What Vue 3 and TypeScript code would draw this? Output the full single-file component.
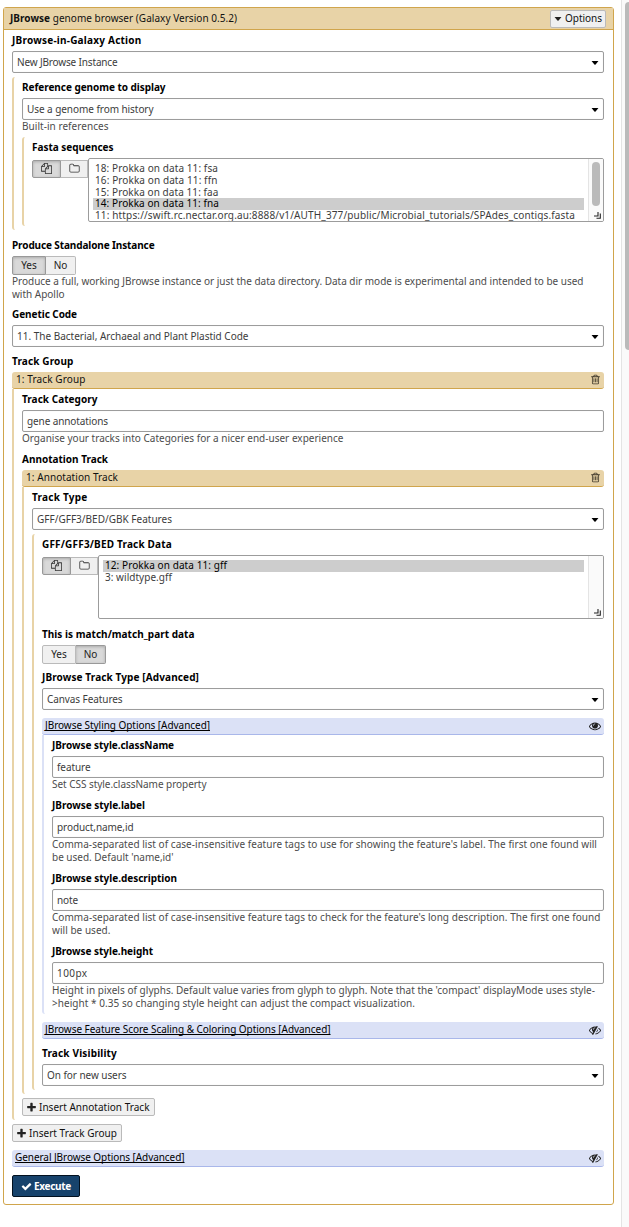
<script setup lang="ts">
import { h, type Directive, type FunctionalComponent } from 'vue'

const paths: Record<string, string> = {
  files: 'M1696 384q40 0 68 28t28 68v1216q0 40-28 68t-68 28h-960q-40 0-68-28t-28-68v-288h-544q-40 0-68-28t-28-68v-672q0-40 20-88t48-76l408-408q28-28 76-48t88-20h416q40 0 68 28t28 68v328q68-40 128-40h416zm-544 213l-299 299h299v-299zm-640-384l-299 299h299v-299zm196 647l316-316v-416h-384v416q0 40-28 68t-68 28h-416v640h512v-256q0-40 20-88t48-76zm956 804v-1152h-384v416q0 40-28 68t-68 28h-416v640h896z',
  folder: 'M1600 1312v-704q0-40-28-68t-68-28h-704q-40 0-68-28t-28-68v-64q0-40-28-68t-68-28h-320q-40 0-68 28t-28 68v960q0 40 28 68t68 28h1216q40 0 68-28t28-68zm128-704v704q0 92-66 158t-158 66h-1216q-92 0-158-66t-66-158v-960q0-92 66-158t158-66h320q92 0 158 66t66 158v32h672q92 0 158 66t66 158z',
  trash: 'M704 736v576q0 14-9 23t-23 9h-64q-14 0-23-9t-9-23v-576q0-14 9-23t23-9h64q14 0 23 9t9 23zm256 0v576q0 14-9 23t-23 9h-64q-14 0-23-9t-9-23v-576q0-14 9-23t23-9h64q14 0 23 9t9 23zm256 0v576q0 14-9 23t-23 9h-64q-14 0-23-9t-9-23v-576q0-14 9-23t23-9h64q14 0 23 9t9 23zm128 724v-948h-896v948q0 22 7 40.5t14.5 27 10.5 8.5h832q3 0 10.5-8.5t14.5-27 7-40.5zm-672-1076h448l-48-117q-7-9-17-11h-317q-10 2-17 11zm928 32v64q0 14-9 23t-23 9h-96v948q0 83-47 143.5t-113 60.5h-832q-66 0-113-58.5t-47-141.5v-952h-96q-14 0-23-9t-9-23v-64q0-14 9-23t23-9h309l70-167q15-37 54-63t79-26h320q40 0 79 26t54 63l70 167h309q14 0 23 9t9 23z',
  eye: 'M1664 960q-152-236-381-353 61 104 61 225 0 185-131.5 316.5t-316.5 131.5-316.5-131.5-131.5-316.5q0-121 61-225-229 117-381 353 133 205 333.5 326.5t434.5 121.5 434.5-121.5 333.5-326.5zm-720-384q0-20-14-34t-34-14q-125 0-214.5 89.5t-89.5 214.5q0 20 14 34t34 14 34-14 14-34q0-86 61-147t147-61q20 0 34-14t14-34zm848 384q0 34-20 69-140 230-376.5 368.5t-499.5 138.5-499.5-139-376.5-368q-20-35-20-69t20-69q140-229 376.5-368t499.5-139 499.5 139 376.5 368q20 35 20 69z',
  eyeSlash: 'M555 1335l78-141q-87-63-136-159t-49-203q0-121 61-225-229 117-381 353 167 258 427 375zm389-759q0-20-14-34t-34-14q-125 0-214.5 89.5t-89.5 214.5q0 20 14 34t34 14 34-14 14-34q0-86 61-147t147-61q20 0 34-14t14-34zm363-191q0 7-1 9-106 189-316 567t-315 566l-49 89q-10 16-28 16-12 0-134-70-16-10-16-28 0-12 44-87-143-65-263.5-173t-208.5-245q-20-31-20-69t20-69q153-235 380-371t496-136q89 0 180 17l54-97q10-16 28-16 5 0 18 6t31 15.5 33 18.5 31.5 18.5 19.5 11.5q16 10 16 27zm37 447q0 139-79 253.5t-209 164.5l280-502q8 45 8 84zm448 128q0 35-20 69-39 64-109 145-150 172-347.5 267t-419.5 95l74-132q212-18 392.5-137t301.5-307q-115-179-282-294l63-112q95 64 182.5 153t144.5 184q20 34 20 69z',
  plus: 'M1600 736v192q0 40-28 68t-68 28h-416v416q0 40-28 68t-68 28h-192q-40 0-68-28t-28-68v-416h-416q-40 0-68-28t-28-68v-192q0-40 28-68t68-28h416v-416q0-40 28-68t68-28h192q40 0 68 28t28 68v416h416q40 0 68 28t28 68z',
  check: 'M1671 566q0 40-28 68l-724 724-136 136q-28 28-68 28t-68-28l-136-136-362-362q-28-28-28-68t28-68l136-136q28-28 68-28t68 28l294 295 656-657q28-28 68-28t68 28l136 136q28 28 28 68z',
  caret: 'M128 448h1536l-640 768q-128 120-256 0z',
}

const Icon: FunctionalComponent<{ name: string; size: number }> = (p) =>
  h('svg', { viewBox: '0 0 1792 1792', width: p.size, height: p.size, fill: 'currentColor' }, [
    h('path', { d: paths[p.name] }),
  ])
Icon.props = ['name', 'size']

// Tracks a line of text so that it runs to the given width in pixels.
const vFit: Directive<HTMLElement, number> = {
  mounted(el, { value }) {
    const range = document.createRange()
    range.selectNodeContents(el)
    const natural = range.getBoundingClientRect().width
    const count = (el.textContent ?? '').length
    if (count > 0) el.style.letterSpacing = `${((value - natural) / count).toFixed(4)}px`
  },
}

interface Line { text: string; width: number }
interface StyleField { label: Line; value: Line; help: Line[] }
const styleFields: StyleField[] = [
  {
    label: { text: 'JBrowse style.className', width: 122 },
    value: { text: 'feature', width: 33.5 },
    help: [{ text: 'Set CSS style.className property', width: 154.5 }],
  },
  {
    label: { text: 'JBrowse style.label', width: 93 },
    value: { text: 'product,name,id', width: 76.5 },
    help: [
      {
        text: "Comma-separated list of case-insensitive feature tags to use for showing the feature's label. The first one found will",
        width: 545,
      },
      { text: "be used. Default 'name,id'", width: 121.5 },
    ],
  },
  {
    label: { text: 'JBrowse style.description', width: 125 },
    value: { text: 'note', width: 21 },
    help: [
      {
        text: "Comma-separated list of case-insensitive feature tags to check for the feature's long description. The first one found",
        width: 548.5,
      },
      { text: 'will be used.', width: 58.5 },
    ],
  },
  {
    label: { text: 'JBrowse style.height', width: 101 },
    value: { text: '100px', width: 30.5 },
    help: [
      {
        text: "Height in pixels of glyphs. Default value varies from glyph to glyph. Note that the 'compact' displayMode uses style-",
        width: 543,
      },
      { text: '>height * 0.35 so changing style height can adjust the compact visualization.', width: 363 },
    ],
  },
]

const fastaOptions: Line[] = [
  { text: '18: Prokka on data 11: fsa', width: 123 },
  { text: '16: Prokka on data 11: ffn', width: 122.5 },
  { text: '15: Prokka on data 11: faa', width: 123.5 },
  { text: '14: Prokka on data 11: fna', width: 124 },
  {
    text: '11: https://swift.rc.nectar.org.au:8888/v1/AUTH_377/public/Microbial_tutorials/SPAdes_contigs.fasta',
    width: 480,
  },
]
const gffOptions: Line[] = [
  { text: '12: Prokka on data 11: gff', width: 122 },
  { text: '3: wildtype.gff', width: 67 },
]
</script>

<template>
  <div class="page">
    <main class="panel">
      <header class="head">
        <span v-fit="227" class="title"><b>JBrowse</b> genome browser (Galaxy Version 0.5.2)</span>
        <button class="btn options"><Icon name="caret" :size="8" /><span v-fit="37">Options</span></button>
      </header>
      <div class="body">
        <div v-fit="129.5" class="label">JBrowse-in-Galaxy Action</div>
        <div class="field"><span v-fit="100.5">New JBrowse Instance</span><Icon class="arrow" name="caret" :size="8" /></div>

        <section class="nest gap4">
          <div v-fit="143.5" class="label">Reference genome to display</div>
          <div class="field"><span v-fit="126.5">Use a genome from history</span><Icon class="arrow" name="caret" :size="8" /></div>
          <div v-fit="86.5" class="help">Built-in references</div>
          <section class="nest inner gap4">
            <div v-fit="81.5" class="label">Fasta sequences</div>
            <div class="picker">
              <div class="modes">
                <button class="mode on"><Icon name="files" :size="11" /></button>
                <button class="mode"><Icon name="folder" :size="11" /></button>
              </div>
              <div class="list">
                <div class="rows">
                  <div v-for="(o, i) in fastaOptions" :key="o.text" v-fit="o.width" class="opt" :class="{ sel: i === 3 }">{{ o.text }}</div>
                </div>
                <div class="track">
                  <div class="thumb"></div>
                  <svg class="grip" viewBox="0 0 7 7" width="7" height="7"><path d="M0 4H4V0M2.5 6.3H6.3V1.5" /></svg>
                </div>
              </div>
            </div>
          </section>
        </section>

        <div v-fit="142.5" class="label gap5">Produce Standalone Instance</div>
        <div class="toggle"><button class="yes on">Yes</button><button class="no">No</button></div>
        <div v-fit="571.5" class="help">Produce a full, working JBrowse instance or just the data directory. Data dir mode is experimental and intended to be used</div>
        <div v-fit="52.5" class="help">with Apollo</div>

        <div v-fit="65" class="label gap3">Genetic Code</div>
        <div class="field"><span v-fit="231.5">11. The Bacterial, Archaeal and Plant Plastid Code</span><Icon class="arrow" name="caret" :size="8" /></div>

        <div v-fit="61.5" class="label gap4">Track Group</div>
        <div class="bar"><span v-fit="69.5">1: Track Group</span><Icon name="trash" :size="11" /></div>
        <section class="nest joined">
          <div v-fit="75.5" class="label">Track Category</div>
          <div class="field"><span v-fit="81">gene annotations</span></div>
          <div v-fit="321.5" class="help">Organise your tracks into Categories for a nicer end-user experience</div>

          <div v-fit="86" class="label gap4">Annotation Track</div>
          <div class="bar"><span v-fit="92">1: Annotation Track</span><Icon name="trash" :size="11" /></div>
          <section class="nest joined">
            <div v-fit="55.5" class="label">Track Type</div>
            <div class="field"><span v-fit="135">GFF/GFF3/BED/GBK Features</span><Icon class="arrow" name="caret" :size="8" /></div>

            <section class="nest inner gap4">
              <div v-fit="130" class="label">GFF/GFF3/BED Track Data</div>
              <div class="picker">
                <div class="modes">
                  <button class="mode on"><Icon name="files" :size="11" /></button>
                  <button class="mode"><Icon name="folder" :size="11" /></button>
                </div>
                <div class="list">
                  <div class="rows">
                    <div v-for="(o, i) in gffOptions" :key="o.text" v-fit="o.width" class="opt" :class="{ sel: i === 0 }">{{ o.text }}</div>
                  </div>
                  <div class="track">
                    <svg class="grip" viewBox="0 0 7 7" width="7" height="7"><path d="M0 4H4V0M2.5 6.3H6.3V1.5" /></svg>
                  </div>
                </div>
              </div>

              <div v-fit="152.5" class="label gap5">This is match/match_part data</div>
              <div class="toggle"><button class="yes">Yes</button><button class="no on">No</button></div>

              <div v-fit="157" class="label gap3">JBrowse Track Type [Advanced]</div>
              <div class="field"><span v-fit="75.5">Canvas Features</span><Icon class="arrow" name="caret" :size="8" /></div>

              <div class="bar blue gap8"><a v-fit="165">JBrowse Styling Options [Advanced]</a><Icon name="eye" :size="12" /></div>
              <section class="nest joined bluenest">
                <template v-for="(f, i) in styleFields" :key="f.label.text">
                  <div v-fit="f.label.width" class="label" :class="{ gap4: i > 0 }">{{ f.label.text }}</div>
                  <div class="field"><span v-fit="f.value.width">{{ f.value.text }}</span></div>
                  <div v-for="line in f.help" :key="line.text" v-fit="line.width" class="help">{{ line.text }}</div>
                </template>
              </section>

              <div class="bar blue gap8"><a v-fit="285.5">JBrowse Feature Score Scaling &amp; Coloring Options [Advanced]</a><Icon name="eyeSlash" :size="12" /></div>

              <div v-fit="75" class="label gap4">Track Visibility</div>
              <div class="field"><span v-fit="79.5">On for new users</span><Icon class="arrow" name="caret" :size="8" /></div>
            </section>
          </section>
          <button class="btn insert gap4"><Icon name="plus" :size="11" /><span v-fit="110.5">Insert Annotation Track</span></button>
        </section>
        <button class="btn insert group gap4"><Icon name="plus" :size="11" /><span v-fit="88">Insert Track Group</span></button>

        <div class="bar blue gap8"><a v-fit="169.5">General JBrowse Options [Advanced]</a><Icon name="eyeSlash" :size="12" /></div>
        <button class="execute gap8"><Icon name="check" :size="11" /><span v-fit="37">Execute</span></button>
      </div>
    </main>
    <aside class="scroll"><div class="scroll-thumb"></div></aside>
  </div>
</template>

<style>
body { margin: 0; background: #fff; overflow: hidden; }
</style>

<style scoped>
.page {
  display: flex;
  justify-content: space-between;
  height: 1227px;
  width: 629px;
  overflow: hidden;
  font: 10px/13px "Noto Sans", "Open Sans", sans-serif;
  color: #111;
  white-space: nowrap;
}
.page * { box-sizing: border-box; }
button { font: inherit; color: inherit; letter-spacing: inherit; margin: 0; padding: 0; }
svg { flex: none; display: block; }
.panel {
  width: 611px;
  height: 1198px;
  margin: 7px 0 0 3px;
  border: 1px solid #d0a54c;
  border-radius: 3px;
}
.head {
  display: flex;
  align-items: center;
  justify-content: space-between;
  height: 22px;
  padding: 0 7px 0 6px;
  background: #e8d3a7;
  border-bottom: 1px solid #d0a54c;
}
.btn {
  display: flex;
  align-items: center;
  height: 18px;
  background: #f0f0f0;
  border: 1px solid #bababa;
  border-radius: 2px;
}
.options { width: 56px; padding-left: 3px; gap: 3px; }
.body { padding: 0 9px 0 8px; }
.gap3 { margin-top: 3px; }
.gap4 { margin-top: 4px; }
.gap5 { margin-top: 5px; }
.gap8 { margin-top: 8px; }
.label { height: 21px; padding-top: 4px; font-weight: 700; color: #000; }
.field {
  display: flex;
  align-items: center;
  justify-content: space-between;
  height: 22px;
  padding: 1px 4px 0 4px;
  border: 1px solid #9c9c9c;
  border-radius: 2px;
  box-shadow: inset 0 0 1px #ddd;
  color: #3c3c3c;
}
.arrow { color: #000; }
.help { height: 13px; color: #4c4c4c; }
.nest { padding-left: 8px; border-left: 2px solid #e8d3a7; border-radius: 3px 0 0 3px; padding-bottom: 4px; }
.joined { border-top-left-radius: 0; }
.bluenest { border-color: #dbe1f6; }
.bar {
  display: flex;
  align-items: center;
  justify-content: space-between;
  height: 17px;
  padding: 0 3px 1px 4px;
  background: #e8d3a7;
  border-bottom: 1px solid #d0a54c;
  border-radius: 3px;
}
.bar svg { color: #3d3628; }
.blue { background: #dbe1f6; border-color: #a9b7ea; padding-left: 3px; }
.blue svg { color: #222; margin-top: 1px; }
.blue a { color: #000; text-decoration: underline; text-underline-offset: 1px; text-decoration-skip-ink: none; }
.picker { display: flex; }
.modes { display: flex; width: 56px; padding-top: 2px; }
.mode { display: flex; align-items: center; justify-content: center; height: 18px; width: 27px; padding-bottom: 1px; background: #f0f0f0; border: 1px solid #bababa; border-left: 0; color: #333; }
.mode.on { width: 29px; background: #d9d9d9; border: 1px solid #999; border-radius: 2px 0 0 2px; box-shadow: inset 0 1px 3px #aaa; }
.list { display: flex; flex: 1; height: 64px; border: 1px solid #9c9c9c; border-radius: 2px; color: #3c3c3c; overflow: hidden; }
.rows { flex: 1; padding: 4px 4px 0; }
.opt { height: 11.8px; line-height: 10.4px; padding-left: 2px; }
.sel { background: #cdcdcd; color: #000; }
.track { display: flex; flex-direction: column; width: 15px; padding: 3px 1px 2px 3px; background: #fafafa; border-left: 1px solid #e4e4e4; }
.thumb { width: 8px; height: 44px; border-radius: 4px; background: #bababa; }
.grip { margin: auto 1px 0 auto; fill: none; stroke: #222; stroke-width: 1.1; }
.toggle { display: flex; height: 19px; }
.toggle button { background: #f0f0f0; border: 1px solid #bababa; color: #222; padding-bottom: 1px; }
.toggle .yes { width: 34px; border-radius: 2px 0 0 2px; }
.toggle .no { width: 30px; border-left: 0; border-radius: 0 2px 2px 0; }
.toggle .on { background: #d9d9d9; border-color: #999; box-shadow: inset 0 1px 3px #aaa; }
.insert { width: 133px; padding-left: 3px; gap: 2px; }
.group { width: 110px; }
.insert svg, .options svg { color: #222; }
.execute { display: flex; align-items: center; width: 68px; height: 22px; padding-left: 8px; gap: 2px; background: #17436c; border: 1px solid #02111f; border-radius: 2px; color: #fff; font-weight: 700; }
.scroll { box-sizing: border-box; width: 8px; padding: 2px 0 0 3px; background: #fafafa; border-left: 1px solid #e4e4e4; }
.scroll-thumb { width: 8px; height: 348px; border-radius: 4px; background: #bababa; }
</style>
